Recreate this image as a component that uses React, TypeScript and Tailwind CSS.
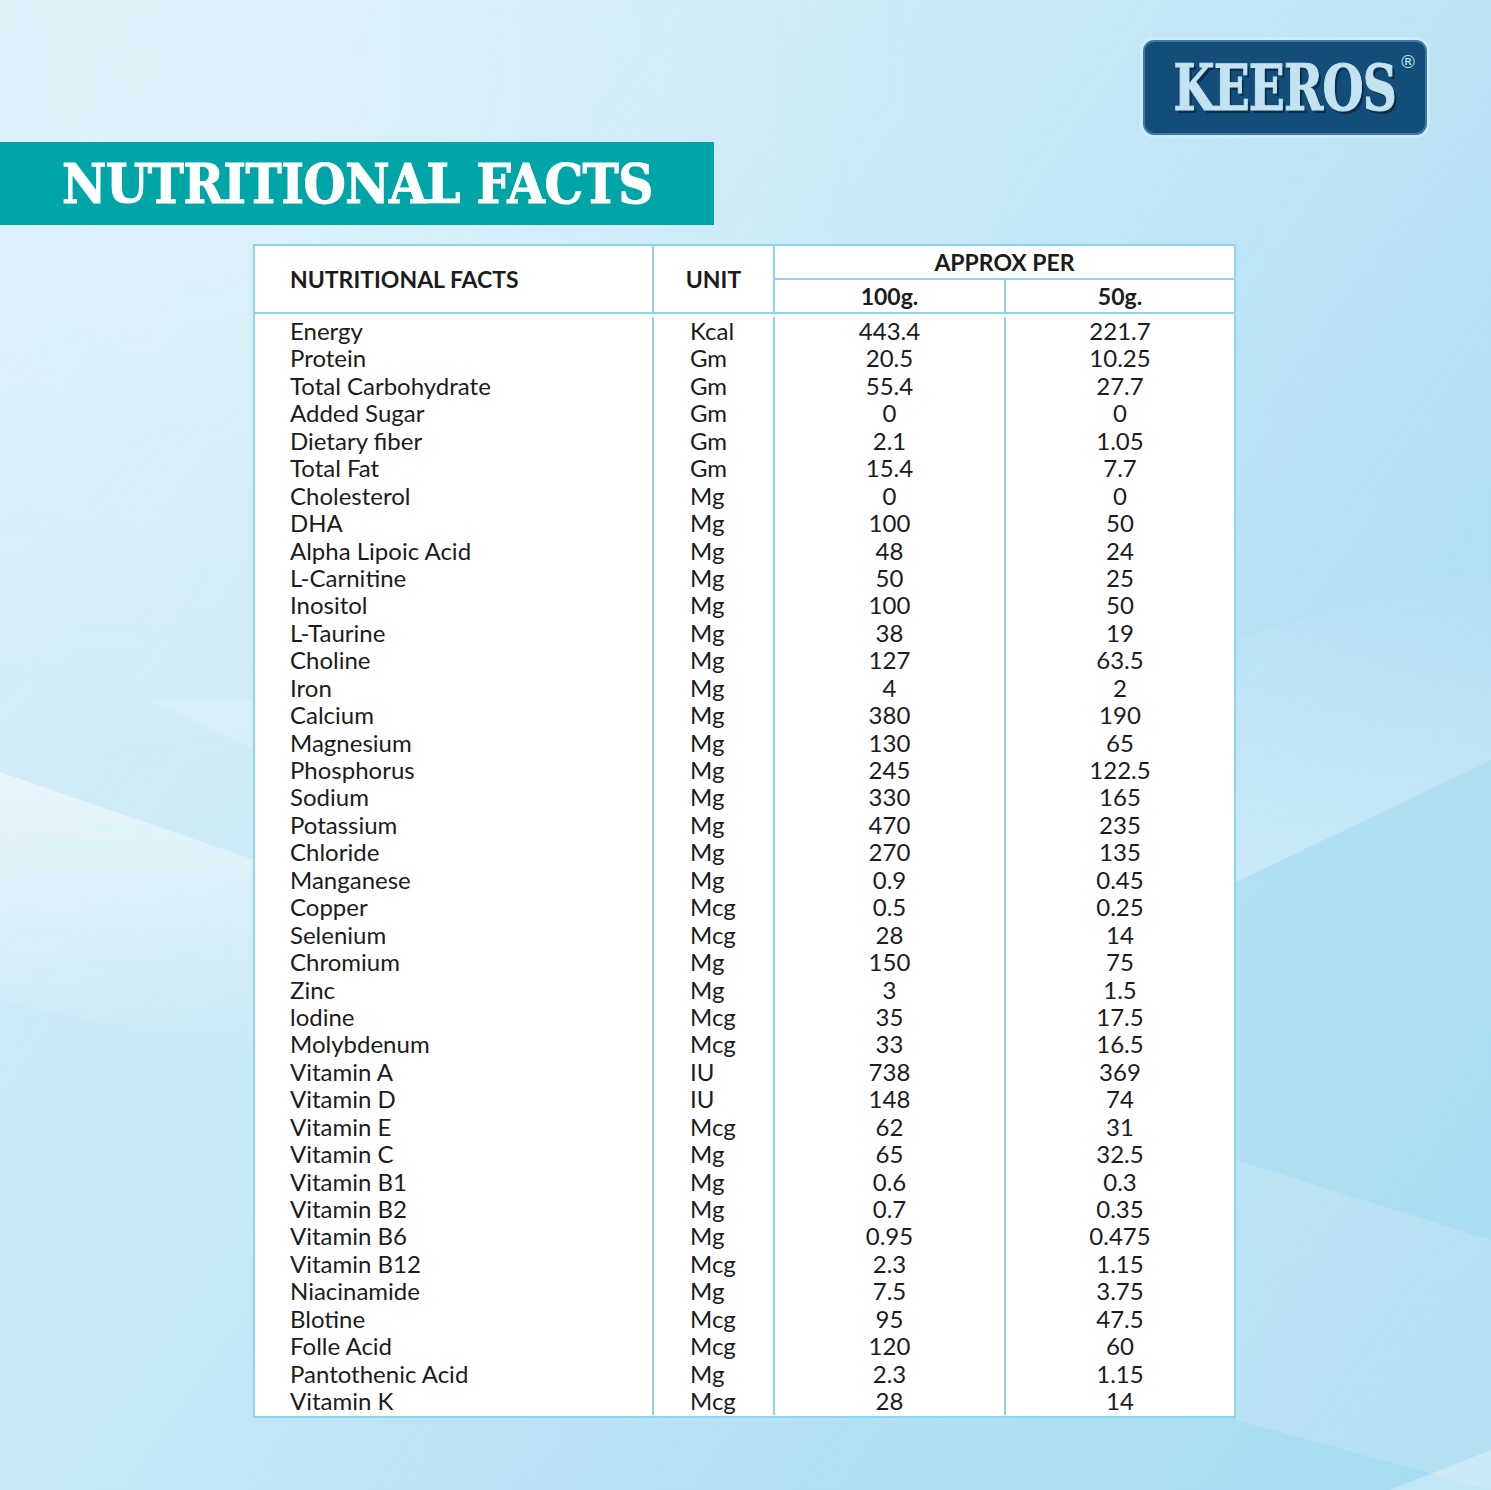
const ROWS: [string, string, string, string][] = [
  ['Energy', 'Kcal', '443.4', '221.7'],
  ['Protein', 'Gm', '20.5', '10.25'],
  ['Total Carbohydrate', 'Gm', '55.4', '27.7'],
  ['Added Sugar', 'Gm', '0', '0'],
  ['Dietary fiber', 'Gm', '2.1', '1.05'],
  ['Total Fat', 'Gm', '15.4', '7.7'],
  ['Cholesterol', 'Mg', '0', '0'],
  ['DHA', 'Mg', '100', '50'],
  ['Alpha Lipoic Acid', 'Mg', '48', '24'],
  ['L-Carnitine', 'Mg', '50', '25'],
  ['Inositol', 'Mg', '100', '50'],
  ['L-Taurine', 'Mg', '38', '19'],
  ['Choline', 'Mg', '127', '63.5'],
  ['Iron', 'Mg', '4', '2'],
  ['Calcium', 'Mg', '380', '190'],
  ['Magnesium', 'Mg', '130', '65'],
  ['Phosphorus', 'Mg', '245', '122.5'],
  ['Sodium', 'Mg', '330', '165'],
  ['Potassium', 'Mg', '470', '235'],
  ['Chloride', 'Mg', '270', '135'],
  ['Manganese', 'Mg', '0.9', '0.45'],
  ['Copper', 'Mcg', '0.5', '0.25'],
  ['Selenium', 'Mcg', '28', '14'],
  ['Chromium', 'Mg', '150', '75'],
  ['Zinc', 'Mg', '3', '1.5'],
  ['lodine', 'Mcg', '35', '17.5'],
  ['Molybdenum', 'Mcg', '33', '16.5'],
  ['Vitamin A', 'IU', '738', '369'],
  ['Vitamin D', 'IU', '148', '74'],
  ['Vitamin E', 'Mcg', '62', '31'],
  ['Vitamin C', 'Mg', '65', '32.5'],
  ['Vitamin B1', 'Mg', '0.6', '0.3'],
  ['Vitamin B2', 'Mg', '0.7', '0.35'],
  ['Vitamin B6', 'Mg', '0.95', '0.475'],
  ['Vitamin B12', 'Mcg', '2.3', '1.15'],
  ['Niacinamide', 'Mg', '7.5', '3.75'],
  ['Blotine', 'Mcg', '95', '47.5'],
  ['Folle Acid', 'Mcg', '120', '60'],
  ['Pantothenic Acid', 'Mg', '2.3', '1.15'],
  ['Vitamin K', 'Mcg', '28', '14'],
]

const SLAB = { fontFamily: '"DejaVu Serif Condensed", "DejaVu Serif", serif' }

/** Soft diagonal light streaks behind the page. */
const Backdrop = () => (
  <svg className="pointer-events-none absolute inset-0 h-full w-full" viewBox="0 0 1491 1490" preserveAspectRatio="none">
    <defs>
      <linearGradient id="streakL" x1="0" y1="0" x2="0" y2="1">
        <stop offset="0" stopColor="#ffffff" stopOpacity="0.5" />
        <stop offset="1" stopColor="#ffffff" stopOpacity="0" />
      </linearGradient>
      <linearGradient id="streakR" x1="0" y1="1" x2="0" y2="0">
        <stop offset="0" stopColor="#ffffff" stopOpacity="0.3" />
        <stop offset="1" stopColor="#ffffff" stopOpacity="0" />
      </linearGradient>
      <radialGradient id="topGlow" cx="0.1" cy="0.05" r="0.6">
        <stop offset="0" stopColor="#ffffff" stopOpacity="0.3" />
        <stop offset="1" stopColor="#ffffff" stopOpacity="0" />
      </radialGradient>
    </defs>
    <rect x="0" y="0" width="1491" height="1490" fill="url(#topGlow)" />
    <polygon points="0,772 260,862 260,1060 0,1000" fill="url(#streakL)" />
    <polygon points="150,700 260,700 260,752" fill="#ffffff" opacity="0.18" />
    <polygon points="1236,882 1491,760 1491,560 1236,640" fill="url(#streakR)" />
    <polygon points="1236,1160 1491,1240 1491,1490 1236,1420" fill="#ffffff" opacity="0.16" />
    <polygon points="1390,1490 1491,1450 1491,1490" fill="#ffffff" opacity="0.3" />
  </svg>
)

const Logo = () => (
  <div className="rounded-[14px] bg-[#d9eef8]/60 p-[3px]">
    <div className="relative flex h-[95px] w-[284px] items-start justify-center rounded-[11px] border-2 border-[#3f7aa6] bg-[#134e7b] pt-[14px]">
      <span
        className="inline-block scale-x-[0.82] text-[64px] font-bold leading-none tracking-[-1px] text-[#c3e3f1] [-webkit-text-stroke:1px_#c3e3f1] [font-stretch:condensed] [text-shadow:3px_3px_0_#0b2f4d]"
        style={SLAB}
      >
        KEEROS
      </span>
      <span
        className="absolute right-[8px] top-[11px] text-[18px] leading-none text-[#c3e3f1]"
        style={{ fontFamily: '"DejaVu Sans", sans-serif' }}
      >
        ®
      </span>
    </div>
  </div>
)

const HeaderCell = ({ children, className = '' }: { children: React.ReactNode; className?: string }) => (
  <div className={`flex items-center text-[23px] font-bold text-[#1c1c1c] ${className}`}>{children}</div>
)

export default function App() {
  const cols = [0, 1, 2, 3] as const
  return (
    <div
      className="relative h-[1490px] w-[1491px] overflow-hidden bg-[linear-gradient(125deg,#d6eef9_0%,#c8e9f7_40%,#b4e1f4_70%,#a6dbf0_100%)]"
      style={{ fontFamily: 'Lato, "Noto Sans", sans-serif' }}
    >
      <Backdrop />
      <div className="relative flex flex-col">
        {/* Brand */}
        <div className="flex justify-end pr-[61px] pt-[37px]">
          <Logo />
        </div>

        {/* Title banner */}
        <div className="mt-[4px] flex h-[83px] w-[714px] items-center bg-[#00a5a8] pl-[62px]">
          <h1
            className="whitespace-nowrap text-[54px] font-bold leading-none tracking-[-0.5px] text-white [-webkit-text-stroke:1px_white] [font-stretch:condensed]"
            style={SLAB}
          >
            NUTRITIONAL FACTS
          </h1>
        </div>

        {/* Table */}
        <div className="ml-[253px] mt-[19px] w-[983px] border-2 border-[#8fd4ee] bg-white text-[#1c1c1c]">
          <div className="grid grid-cols-[397px_121px_231px_230px] grid-rows-[34px_32px] border-b-2 border-[#8fd4ee]">
            <HeaderCell className="row-span-2 pl-[35px]">NUTRITIONAL FACTS</HeaderCell>
            <HeaderCell className="row-span-2 justify-center border-l-2 border-[#8fd4ee]">UNIT</HeaderCell>
            <HeaderCell className="col-span-2 justify-center border-b-2 border-l-2 border-[#8fd4ee]">APPROX PER</HeaderCell>
            <HeaderCell className="justify-center border-l-2 border-[#8fd4ee]">100g.</HeaderCell>
            <HeaderCell className="justify-center border-l-2 border-[#8fd4ee]">50g.</HeaderCell>
          </div>
          <div className="grid grid-cols-[397px_121px_231px_230px] pb-[1px] pt-[3px] text-[24px] leading-[27.44px]">
            {cols.map((c) => (
              <div
                key={c}
                className={
                  c === 0
                    ? 'pl-[35px]'
                    : c === 1
                      ? 'border-l-2 border-[#8fd4ee] pl-[36px]'
                      : 'border-l-2 border-[#8fd4ee] text-center'
                }
              >
                {ROWS.map((r) => (
                  <div key={r[0]}>{r[c]}</div>
                ))}
              </div>
            ))}
          </div>
        </div>
      </div>
    </div>
  )
}
